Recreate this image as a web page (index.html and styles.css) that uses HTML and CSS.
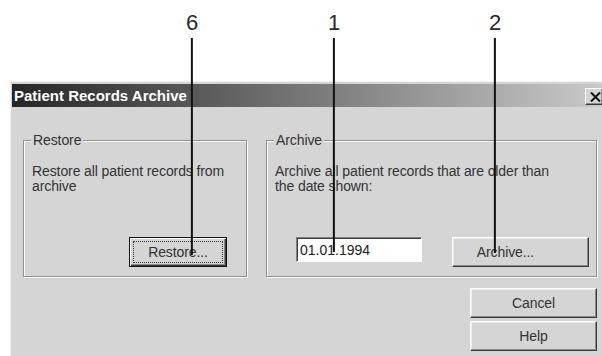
FILE: index.html
```html
<!DOCTYPE html>
<html>
<head>
  <meta charset="utf-8">
  <title>Patient Records Archive</title>
  <link rel="stylesheet" href="styles.css">
</head>
<body>

<!-- callout numbers pointing at the controls -->
<div class="callout callout-6"><span class="callout-num">6</span><span class="callout-line"></span></div>
<div class="callout callout-1"><span class="callout-num">1</span><span class="callout-line"></span></div>
<div class="callout callout-2"><span class="callout-num">2</span><span class="callout-line"></span></div>

<div class="dialog">
  <div class="titlebar">
    <span class="title">Patient Records Archive</span>
    <button class="close" aria-label="Close">
      <svg width="11" height="10" viewBox="0 0 11 10"><path d="M1 0.5 L10 9.5 M10 0.5 L1 9.5" stroke="#111" stroke-width="2" fill="none"/></svg>
    </button>
  </div>

  <div class="dialog-body">
    <div class="groups">
      <section class="group group-restore">
        <span class="group-title">Restore</span>
        <p>Restore all patient records from<br>archive</p>
        <button class="btn btn-default btn-restore"><span class="focus">Restore...</span></button>
      </section>

      <section class="group group-archive">
        <span class="group-title">Archive</span>
        <p>Archive all patient records that are older than<br>the date shown:</p>
        <div class="archive-row">
          <input class="date" type="text" value="01.01.1994">
          <button class="btn btn-archive">Archive...</button>
        </div>
      </section>
    </div>

    <div class="side-buttons">
      <button class="btn btn-side">Cancel</button>
      <button class="btn btn-side">Help</button>
    </div>
  </div>
</div>

</body>
</html>
```

FILE: styles.css
```css
body {
  margin: 0;
  width: 602px;
  height: 356px;
  overflow: hidden;
  position: relative;
  background: #fff;
  font-family: "Liberation Sans", Arial, sans-serif;
  color: #333;
}

/* callouts */
.callout {
  position: absolute;
  top: 12px;
  z-index: 2;
  display: flex;
  flex-direction: column;
  align-items: center;
  transform: translateX(-50%);
}
.callout-num {
  font-size: 22px;
  line-height: 22px;
  color: #2a2a2a;
}
.callout-line {
  width: 2px;
  height: 217px;
  margin-top: 4px;
  background: #111;
}
.callout-6 { left: 192px; }
.callout-1 { left: 334px; }
.callout-1 .callout-line { height: 214px; }
.callout-2 { left: 495px; }
.callout-2 .callout-line { height: 215px; }

/* dialog window */
.dialog {
  box-sizing: border-box;
  width: 598px;
  height: 290px;
  margin: 81px 0 0 10px;
  padding: 2px 0 0 1px;
  background: #d5d5d5;
  border-top: 1px solid #f2f2f2;
  border-left: 1px solid #f2f2f2;
}
.titlebar {
  display: flex;
  justify-content: space-between;
  align-items: flex-start;
  height: 23px;
  background: linear-gradient(to right, #262626, #cbcbcb);
}
.title {
  padding: 1px 0 0 2px;
  line-height: 22px;
  font-size: 15px;
  font-weight: bold;
  color: #fff;
}
.close {
  display: flex;
  align-items: center;
  justify-content: center;
  width: 18px;
  height: 17px;
  margin: 4px 5px 0 0;
  padding: 0 0 0 2px;
  background: #d5d5d5;
  border: 1px solid;
  border-color: #fff #3a3a3a #3a3a3a #fff;
  box-shadow: inset -1px -1px #8a8a8a;
}

.dialog-body {
  width: 574px;
  padding: 33px 0 0 11px;
  font-size: 14px;
  letter-spacing: -0.1px;
}
.groups {
  display: flex;
  gap: 19px;
}
.group {
  position: relative;
  box-sizing: border-box;
  height: 137px;
  display: flex;
  flex-direction: column;
  border: 1px solid #8f8f8f;
  box-shadow: inset 1px 1px #fff, 1px 1px #fff;
}
.group-restore {
  width: 224px;
  padding: 23px 19px 9px 8px;
}
.group-archive {
  width: 331px;
  padding: 23px 7px 9px 8px;
}
.group-title {
  position: absolute;
  top: -8px;
  left: 7px;
  padding: 0 2px;
  line-height: 15px;
  background: #d5d5d5;
}
.group p {
  margin: 0;
  line-height: 15px;
}

/* buttons */
.btn {
  box-sizing: border-box;
  height: 30px;
  padding: 0;
  font-family: inherit;
  font-size: 14px;
  letter-spacing: -0.1px;
  color: #333;
  background: #d5d5d5;
  border: 1px solid;
  border-color: #fff #3a3a3a #3a3a3a #fff;
  box-shadow: inset -1px -1px #8a8a8a, inset 1px 1px #ececec;
}
.btn-default {
  padding: 3px;
  border: 1px solid #111;
  box-shadow: inset 1px 1px #fff, inset -1px -1px #3a3a3a, inset -2px -2px #8a8a8a;
}
.focus {
  display: flex;
  align-items: center;
  justify-content: center;
  height: 100%;
  box-sizing: border-box;
  border: 1px dotted #333;
}
.btn-restore {
  width: 98px;
  margin-top: auto;
  align-self: flex-end;
}

.archive-row {
  display: flex;
  align-items: flex-start;
  margin-top: auto;
}
.date {
  box-sizing: border-box;
  width: 126px;
  height: 25px;
  margin-left: 21px;
  padding: 0 0 0 3px;
  font-family: inherit;
  font-size: 14px;
  color: #222;
  background: #fff;
  border: 1px solid;
  border-color: #808080 #fff #fff #808080;
  box-shadow: inset 1px 1px #404040;
  outline: none;
}
.btn-archive {
  width: 137px;
  margin-left: auto;
  padding-right: 30px;
}

.side-buttons {
  display: flex;
  flex-direction: column;
  align-items: flex-end;
  gap: 3px;
  margin-top: 11px;
}
.btn-side {
  width: 127px;
}
```
